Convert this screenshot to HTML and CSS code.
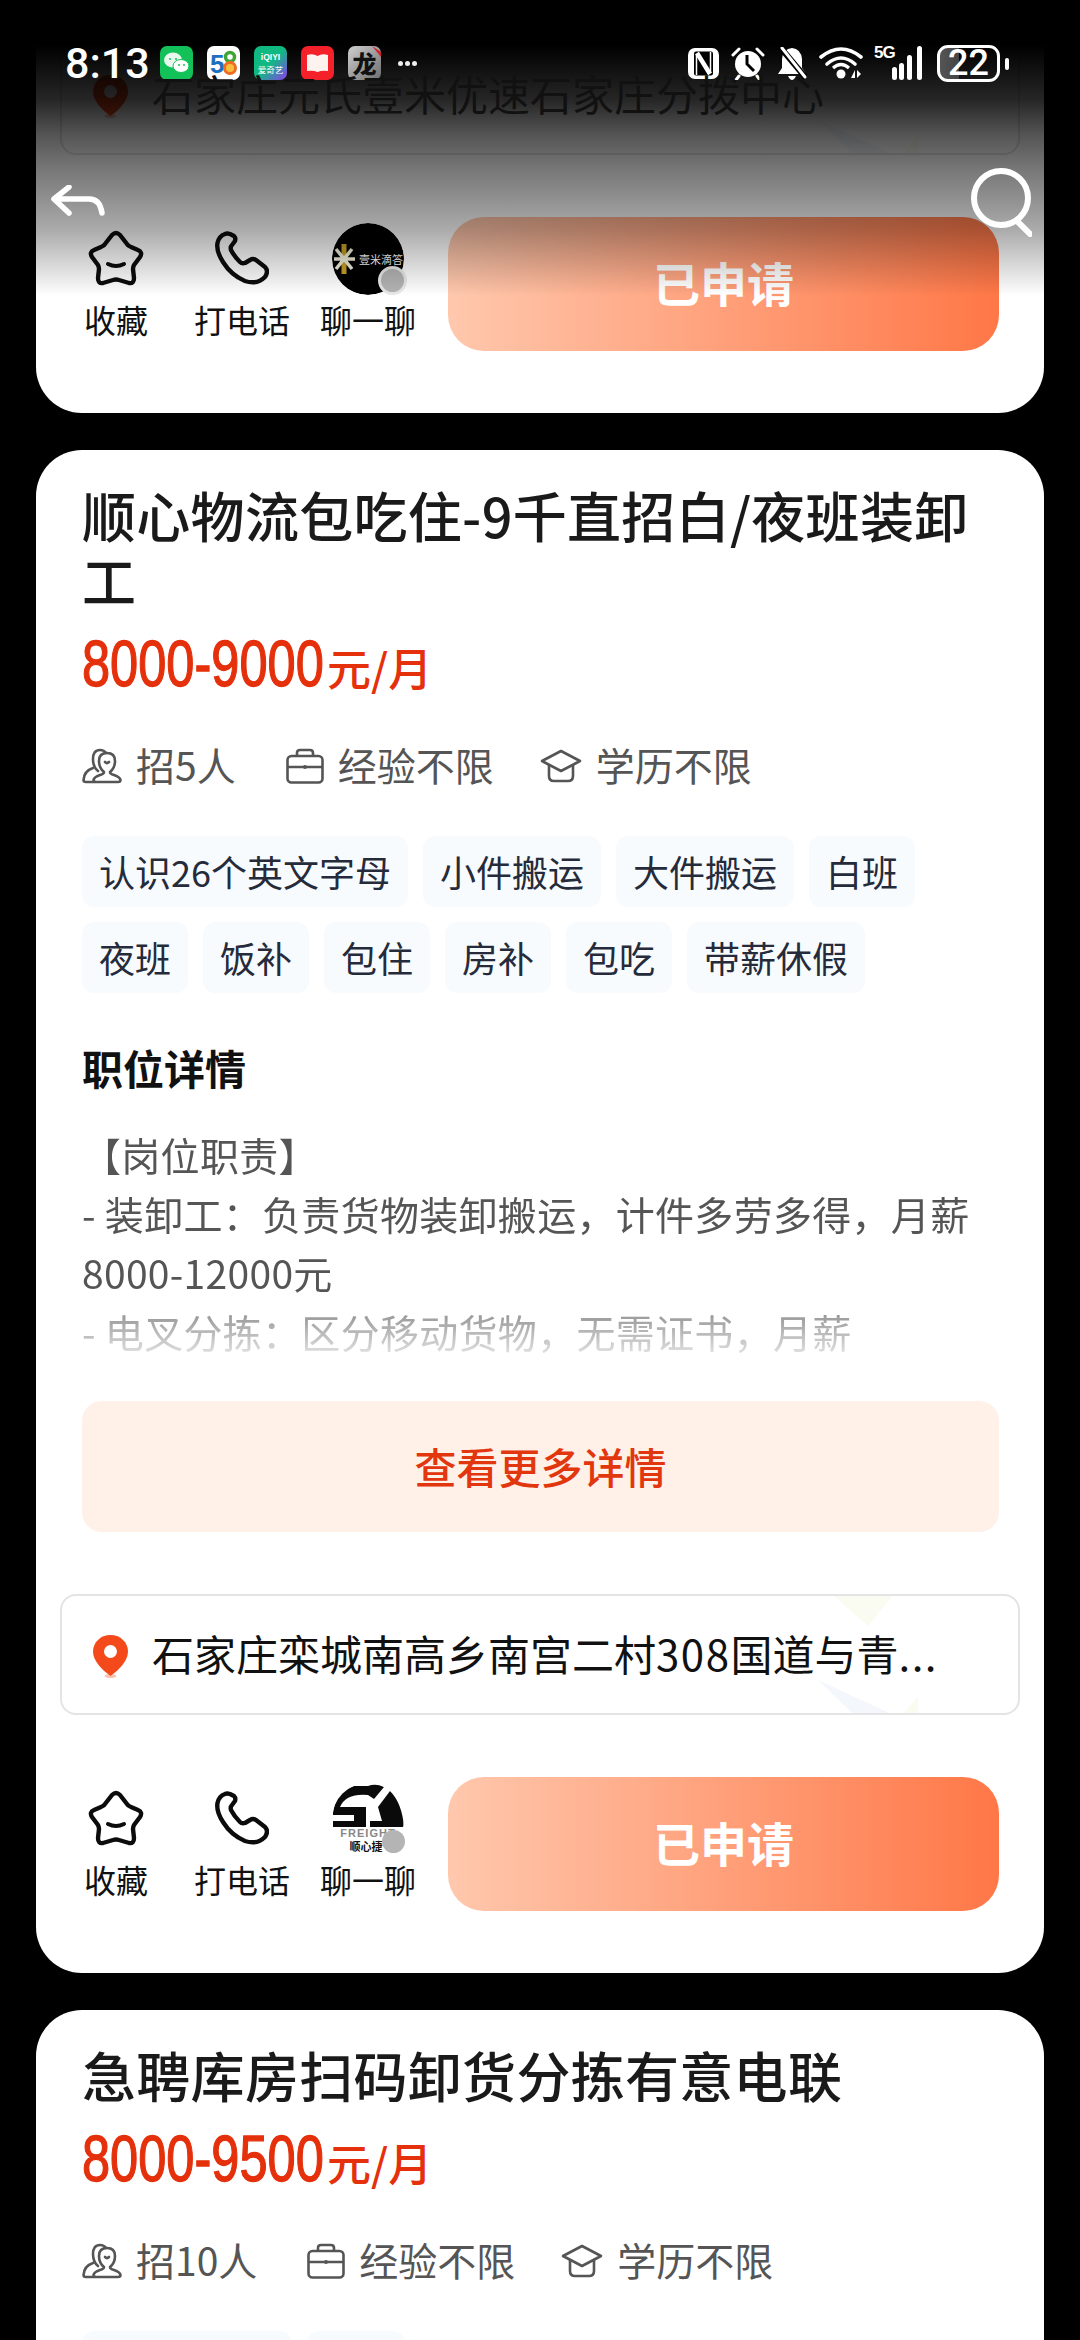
FILE: index.html
```html
<!DOCTYPE html>
<html lang="zh-CN">
<head>
<meta charset="utf-8">
<title>职位列表</title>
<link rel="stylesheet" href="styles.css">
</head>
<body>
<svg class="defs" aria-hidden="true">
  <symbol id="i-star" viewBox="0 0 56 56"><path d="M24 5Q28 1 32 5L39 14Q40 16 43 17L50 20Q55 22 52 27L46 35Q45 37 45 39L46 48Q46 54 41 53L31 50Q28 49 25 50L15 53Q10 54 10 48L11 39Q11 37 10 35L4 27Q1 22 6 20L13 17Q16 16 17 14Z" fill="none" stroke="#0c0c0c" stroke-width="4.400" stroke-linejoin="round"/><path d="M20 34Q28 38 36 34" fill="none" stroke="#0c0c0c" stroke-width="4" stroke-linecap="round"/></symbol>
  <symbol id="i-phone" viewBox="0 0 54 54"><path d="M10 3Q4 5 2.500 12Q1 20 8 31Q16 44 30 50Q42 54 50 46Q54 40 50 36L41 29Q38 27 35 29L30 32Q27 33 25 31Q19 25 16 19Q15 16 17 14L20 10Q21 7 19 5L15 3Q12 2 10 3Z" fill="none" stroke="#0c0c0c" stroke-width="4.400" stroke-linejoin="round"/></symbol>
  <symbol id="i-people" viewBox="0 0 40 36"><g fill="none" stroke="#555" stroke-width="2.600" stroke-linejoin="round" stroke-linecap="round"><path d="M16 23Q11 19 11 11Q11 2 18 2Q22 2 24 5"/><path d="M11 20Q2 23 1.500 32Q1.500 34 4 34H13"/><path d="M22 24Q17 20 17 13Q17 5 25 5Q33 5 33 13Q33 20 28 24Q28 26 32 27Q38 29 38.500 32Q38.500 34 36 34H14Q11.500 34 11.500 32Q12 29 18 27Q22 26 22 24Z"/><path d="M23 14Q25 16 27 14"/></g></symbol>
  <symbol id="i-case" viewBox="0 0 38 36"><g fill="none" stroke="#555" stroke-width="2.600" stroke-linejoin="round"><rect x="1.500" y="8" width="35" height="26.500" rx="4"/><path d="M11 8V5Q11 2 14 2H24Q27 2 27 5V8"/><path d="M1.500 19H36.500"/></g><circle cx="19" cy="19" r="2" fill="#555"/></symbol>
  <symbol id="i-cap" viewBox="0 0 42 34"><g fill="none" stroke="#555" stroke-width="2.600" stroke-linejoin="round" stroke-linecap="round"><path d="M21 2L40 12L21 22L2 12Z"/><path d="M9 16V27Q9 32 14 32H28Q33 32 33 27V16"/></g></symbol>
  <symbol id="i-pin" viewBox="0 0 35 43"><ellipse cx="17.500" cy="41" rx="6" ry="2" fill="#f5c4b5"/><path d="M17.500 0C7.500 0 0 7.500 0 16.500C0 26 9 35 17.500 41C26 35 35 26 35 16.500C35 7.500 27.500 0 17.500 0Z" fill="#f4491a"/><circle cx="17.500" cy="16.500" r="6.500" fill="#fff"/></symbol>
  <symbol id="i-deco" viewBox="0 0 100 121"><path d="M14 0H76L50 32Z" fill="#fafbf1"/><path d="M0 86L76 121H36Z" fill="#f4f8fc"/><path d="M84 121L100 102V121Z" fill="#fafbf1"/></symbol>
</svg>

<main class="screen">
  <div class="list">
    <section class="card card-top">
      <div class="loc">
        <svg class="pin"><use href="#i-pin"/></svg>
        <span class="loc-text">石家庄元氏壹米优速石家庄分拨中心</span>
        <svg class="deco"><use href="#i-deco"/></svg>
      </div>
      <div class="actions">
        <div class="act"><svg class="act-star"><use href="#i-star"/></svg><span>收藏</span></div>
        <div class="act"><svg class="act-phone"><use href="#i-phone"/></svg><span>打电话</span></div>
        <div class="act">
          <div class="avatar">
            <svg viewBox="0 0 72 72" class="avatar-img"><circle cx="36" cy="36" r="36" fill="#000"/><path d="M12 21V51" stroke="#c9a227" stroke-width="5"/><path d="M2 36H23M4 26L20 46M20 26L4 46" stroke="#f3f0dc" stroke-width="3.500"/><text x="27" y="41" class="avatar-logo">壹米滴答</text></svg>
            <i class="dot dot-ring"></i>
          </div>
          <span>聊一聊</span>
        </div>
        <button class="apply" type="button">已申请</button>
      </div>
    </section>

    <section class="card">
      <div class="body">
        <h2 class="title">顺心物流包吃住-9千直招白/夜班装卸工</h2>
        <p class="pay"><b>8000-9000</b><span>元/月</span></p>
        <ul class="meta">
          <li><svg class="m-people"><use href="#i-people"/></svg>招5人</li>
          <li><svg class="m-case"><use href="#i-case"/></svg>经验不限</li>
          <li><svg class="m-cap"><use href="#i-cap"/></svg>学历不限</li>
        </ul>
        <ul class="tags">
          <li>认识26个英文字母</li><li>小件搬运</li><li>大件搬运</li><li>白班</li>
          <li>夜班</li><li>饭补</li><li>包住</li><li>房补</li><li>包吃</li><li>带薪休假</li>
        </ul>
        <h3 class="sub">职位详情</h3>
        <div class="desc">【岗位职责】<br>- 装卸工：负责货物装卸搬运，计件多劳多得，月薪8000-12000元<br>- 电叉分拣：区分移动货物，无需证书，月薪</div>
        <button class="more" type="button">查看更多详情</button>
      </div>
      <div class="loc">
        <svg class="pin"><use href="#i-pin"/></svg>
        <span class="loc-text">石家庄栾城南高乡南宫二村<span class="num">308</span>国道与青<span class="num">...</span></span>
        <svg class="deco"><use href="#i-deco"/></svg>
      </div>
      <div class="actions">
        <div class="act"><svg class="act-star"><use href="#i-star"/></svg><span>收藏</span></div>
        <div class="act"><svg class="act-phone"><use href="#i-phone"/></svg><span>打电话</span></div>
        <div class="act">
          <div class="avatar">
            <svg viewBox="0 0 72 72" class="avatar-img"><path d="M1 30Q4 8 22 3L36 3Q44 0 52 4L42 16L36 12Q14 10 8 24H34V44H1V38H22V32H1Z" fill="#0a0a0a"/><path d="M46 24L58 8Q70 20 72 44H38V38H50Z" fill="#0a0a0a"/><text x="36" y="54" class="avatar-en">FREIGHT</text><text x="34" y="68" class="avatar-cn">顺心捷</text></svg>
            <i class="dot"></i>
          </div>
          <span>聊一聊</span>
        </div>
        <button class="apply" type="button">已申请</button>
      </div>
    </section>

    <section class="card card-last">
      <div class="body">
        <h2 class="title">急聘库房扫码卸货分拣有意电联</h2>
        <p class="pay"><b>8000-9500</b><span>元/月</span></p>
        <ul class="meta">
          <li><svg class="m-people"><use href="#i-people"/></svg>招10人</li>
          <li><svg class="m-case"><use href="#i-case"/></svg>经验不限</li>
          <li><svg class="m-cap"><use href="#i-cap"/></svg>学历不限</li>
        </ul>
        <div class="tags">
          <span class="tag-blank tag-wide"></span><span class="tag-blank tag-narrow"></span>
        </div>
      </div>
    </section>
  </div>

  <div class="shade"></div>

  <header class="status">
    <div class="status-left">
      <time class="clock">8:13</time>
      <svg class="app" viewBox="0 0 33 34"><rect width="33" height="34" rx="7" fill="#12c258"/><ellipse cx="13" cy="14" rx="9" ry="7.500" fill="#e9f7ee"/><ellipse cx="21" cy="20" rx="8" ry="6.500" fill="#fff" stroke="#12c258"/><circle cx="10" cy="13" r="1" fill="#12c258"/><circle cx="16" cy="13" r="1" fill="#12c258"/><circle cx="19" cy="19" r="1" fill="#12c258"/><circle cx="24" cy="19" r="1" fill="#12c258"/></svg>
      <svg class="app" viewBox="0 0 33 34"><rect width="33" height="34" rx="7" fill="#fff"/><text x="3" y="27" class="app-58a">5</text><circle cx="23" cy="11" r="4.500" fill="none" stroke="#3fa535" stroke-width="3.500"/><circle cx="23" cy="22" r="5.500" fill="#f5c13c" stroke="#ef6c24" stroke-width="3"/></svg>
      <svg class="app" viewBox="0 0 33 34"><defs><linearGradient id="g-iq" x1="0" y1="0" x2="1" y2="1"><stop offset=".5" stop-color="#10b981"/><stop offset="1" stop-color="#8b3ff0"/></linearGradient></defs><rect width="33" height="34" rx="7" fill="url(#g-iq)"/><text x="16.500" y="14" class="app-iq">iQIYI</text><text x="16.500" y="27" class="app-iq2">爱奇艺</text></svg>
      <svg class="app" viewBox="0 0 33 34"><rect width="33" height="34" rx="7" fill="#f4202a"/><path d="M6 9Q12 7 16.500 10Q21 7 27 9V25Q21 24 16.500 26Q12 24 6 25Z" fill="#fdf3ee"/></svg>
      <svg class="app" viewBox="0 0 33 34"><defs><linearGradient id="g-game" x1="0" y1="0" x2="1" y2="1"><stop offset="0" stop-color="#cfcfcf"/><stop offset="1" stop-color="#6e6e6e"/></linearGradient></defs><rect width="33" height="34" rx="7" fill="url(#g-game)"/><path d="M24 0L33 6V11Z" fill="#d5202a"/><text x="16.500" y="27" class="app-game">龙</text></svg>
      <span class="more-dots"><i></i><i></i><i></i></span>
    </div>
    <div class="status-right">
      <svg class="s-nfc" viewBox="0 0 31 31"><rect width="31" height="31" rx="7" fill="#fff"/><rect x="6" y="3.500" width="19" height="24" rx="2" fill="#000"/><path d="M9 5L22 26" stroke="#fff" stroke-width="4.500"/><path d="M8.500 6V27M22.500 4V25" stroke="#fff" stroke-width="1.500"/></svg>
      <svg class="s-alarm" viewBox="0 0 36 33"><circle cx="18" cy="17" r="13" fill="#fff"/><path d="M17 8V17L24 24" fill="none" stroke="#000" stroke-width="3"/><path d="M3 8L9 2M33 8L27 2M9 29L6 33M27 29L30 33" stroke="#fff" stroke-width="3" stroke-linecap="round"/></svg>
      <svg class="s-bell" viewBox="0 0 30 33"><path d="M15 1Q24 2 25 12V21L29 27H1L5 21V12Q6 2 15 1Z" fill="#fff"/><path d="M11 29H19Q17 33 15 33Q13 33 11 29Z" fill="#fff"/><path d="M3 0L29 31" stroke="#000" stroke-width="6"/><path d="M5 1L28 30" stroke="#fff" stroke-width="3" stroke-linecap="round"/></svg>
      <svg class="s-wifi" viewBox="0 0 44 34"><g fill="none" stroke="#fff" stroke-width="3.600" stroke-linecap="round"><path d="M2 11Q22 -5 42 11"/><path d="M8 18Q22 6 36 18"/></g><path d="M14 22Q22 15 30 22" fill="none" stroke="#fff" stroke-width="3.200"/><circle cx="22" cy="28" r="4.500" fill="#fff"/><path d="M32 32L36 24V32ZM38 24L42 28L38 32Z" fill="#fff"/></svg>
      <div class="s-signal">
        <span class="s-5g">5G</span>
        <svg viewBox="0 0 42 36"><g fill="#fff"><rect x="8" y="22" width="5" height="13" rx="2.500"/><rect x="15" y="18" width="5" height="17" rx="2.500"/><rect x="23" y="10" width="5" height="25" rx="2.500"/><rect x="33" y="1" width="5" height="34" rx="2.500"/></g></svg>
      </div>
      <div class="battery"><span>22</span></div>
    </div>
  </header>

  <svg class="back" viewBox="0 0 54 31"><path d="M18 2L3 14L18 28M4 14H38Q49 14 51 28" fill="none" stroke="#fff" stroke-width="5.500" stroke-linecap="round" stroke-linejoin="round"/></svg>
  <svg class="search" viewBox="0 0 62 70"><circle cx="31" cy="31" r="27" fill="none" stroke="#fff" stroke-width="6"/><path d="M47 54L60 67" stroke="#fff" stroke-width="6" stroke-linecap="round"/></svg>
</main>
</body>
</html>
```
FILE: styles.css
```css
* { box-sizing: border-box; }
html, body { margin: 0; padding: 0; background: #000; }
body {
  font-family: "Noto Sans CJK SC", "Noto Sans", sans-serif;
  color: #111;
}
ul { list-style: none; margin: 0; padding: 0; }
h2, h3, p { margin: 0; }
button { font-family: inherit; border: 0; cursor: pointer; }

.defs { position: absolute; width: 0; height: 0; }

.screen {
  position: relative;
  width: 1080px;
  height: 2340px;
  overflow: hidden;
  background: #000;
}

.list {
  display: flex;
  flex-direction: column;
  gap: 37px;
  padding: 0 36px;
}

.card {
  background: #fff;
  border-radius: 46px;
  padding-bottom: 62px;
  flex: none;
}
.card-top { padding-top: 34px; border-radius: 0 0 46px 46px; }
.card-last { padding-bottom: 40px; }

.body { padding: 32px 45px 0 46px; }

.title {
  font-size: 54px;
  line-height: 65px;
  font-weight: 500;
  letter-spacing: .3px;
  color: #1a1a1a;
}

.pay {
  display: flex;
  align-items: baseline;
  margin-top: 17px;
  height: 70px;
  line-height: 70px;
  color: #e5300c;
}
.pay b {
  width: 240px;
  font-family: "Liberation Sans", sans-serif;
  font-size: 64px;
  font-weight: 400;
  white-space: nowrap;
  transform: scaleX(.79);
  transform-origin: 0 50%;
  -webkit-text-stroke: 1.300px #e5300c;
}
.pay span { font-size: 44px; font-weight: 500; margin-left: 5px; }

.meta {
  display: flex;
  gap: 50px;
  margin-top: 40px;
  height: 50px;
  align-items: center;
  font-size: 39px;
  line-height: 50px;
  color: #555;
}
.meta li { display: flex; align-items: center; gap: 14px; }
.meta svg { flex: none; }
.m-people { width: 40px; height: 36px; margin-top: 3px; }
.m-case { width: 38px; height: 36px; margin-top: 3px; }
.m-cap { width: 42px; height: 34px; margin-top: 3px; margin-left: -4px; }

.tags {
  display: flex;
  flex-wrap: wrap;
  gap: 15px;
  margin-top: 47px;
  font-size: 36px;
  line-height: 70px;
  color: #252b3a;
}
.tags li {
  padding: 0 17px;
  height: 71px;
  background: #f8fbfd;
  border-radius: 12px;
}
.tag-blank { height: 71px; background: #f8fbfd; border-radius: 12px; }
.tag-wide { width: 210px; }
.tag-narrow { width: 98px; }

.sub {
  margin-top: 49px;
  font-size: 41px;
  line-height: 50px;
  font-weight: 700;
  color: #111;
}

.desc {
  margin-top: 33px;
  height: 236px;
  overflow: hidden;
  font-size: 39px;
  line-height: 59px;
  letter-spacing: .3px;
  color: #555;
  -webkit-mask-image: linear-gradient(#000 178px, rgba(0,0,0,.6) 190px, rgba(0,0,0,.15) 232px);
  mask-image: linear-gradient(#000 178px, rgba(0,0,0,.6) 190px, rgba(0,0,0,.15) 232px);
}

.more {
  display: block;
  width: 100%;
  height: 131px;
  margin-top: 40px;
  background: #fff0e8;
  border-radius: 20px;
  font-size: 42px;
  font-weight: 500;
  color: #e2370e;
  padding-bottom: 4px;
}

.loc {
  position: relative;
  display: flex;
  align-items: center;
  gap: 24px;
  height: 121px;
  margin: 62px 24px 0;
  padding-left: 31px;
  border: 2px solid #e4e4e4;
  border-radius: 16px;
  overflow: hidden;
}
.card-top .loc { margin-top: 0; }
.pin { width: 35px; height: 43px; flex: none; margin-top: 3px; }
.loc-text { font-size: 42px; line-height: 60px; color: #111; white-space: nowrap; position: relative; z-index: 1; margin-top: -4px; }
.num { letter-spacing: 1.500px; }
.deco { position: absolute; right: 100px; top: -2px; width: 100px; height: 121px; }

.actions {
  display: flex;
  align-items: flex-start;
  gap: 14px;
  margin: 62px 45px 0 24px;
}
.act {
  width: 112px;
  height: 134px;
  display: flex;
  flex-direction: column;
  align-items: center;
  font-size: 32px;
  line-height: 44px;
  color: #111;
  white-space: nowrap;
}
.act > span { margin-top: auto; margin-bottom: 10px; }
.act-star { width: 56px; height: 56px; margin-top: 13px; }
.act-phone { width: 54px; height: 54px; margin-top: 14px; }

.avatar { position: relative; width: 72px; height: 72px; margin-top: 6px; }
.avatar-img { display: block; width: 72px; height: 72px; border-radius: 50%; }
.avatar-logo { font-size: 11px; fill: #fff; }
.avatar-en { font-family: "Liberation Sans", sans-serif; font-size: 11px; font-weight: 700; letter-spacing: 1px; fill: #888; text-anchor: middle; }
.avatar-cn { font-size: 11px; font-weight: 700; fill: #111; text-anchor: middle; }
.dot {
  position: absolute;
  right: -1px;
  bottom: 2px;
  width: 23px;
  height: 23px;
  border-radius: 50%;
  background: #b4b4b4;
}
.dot-ring { box-sizing: content-box; right: -3px; bottom: 0; border: 3px solid #e8e8e8; }

.apply {
  flex: none;
  width: 551px;
  height: 134px;
  margin-left: 10px;
  border-radius: 36px;
  background: linear-gradient(90deg, #ffc8ad, #ff7747);
  color: #fff;
  font-size: 47px;
  font-weight: 700;
  padding-bottom: 6px;
}

.shade {
  position: absolute;
  left: 0;
  top: 0;
  width: 100%;
  height: 296px;
  pointer-events: none;
  background: linear-gradient(180deg,
    #000 0,
    #000 45px,
    rgba(0,0,0,.85) 100px,
    rgba(0,0,0,.68) 133px,
    rgba(0,0,0,.54) 167px,
    rgba(0,0,0,.43) 200px,
    rgba(0,0,0,.33) 230px,
    rgba(0,0,0,.13) 270px,
    rgba(0,0,0,0) 296px);
}

.status {
  position: absolute;
  left: 0;
  top: 0;
  width: 100%;
  height: 90px;
  display: flex;
  justify-content: space-between;
  padding: 43px 80px 0 65px;
  color: #fff;
}
.status-left { display: flex; align-items: center; gap: 14px; height: 40px; }
.clock { font-family: Roboto, sans-serif; font-size: 43px; font-weight: 500; line-height: 40px; margin-right: -4px; }
.app { width: 33px; height: 34px; flex: none; }
.app-58a { font-family: "Liberation Sans", sans-serif; font-size: 26px; font-weight: 700; fill: #1d6fc0; }
.app-iq { font-family: "Liberation Sans", sans-serif; font-size: 8.500px; font-weight: 700; fill: #fff; text-anchor: middle; }
.app-iq2 { font-size: 8.500px; fill: #fff; text-anchor: middle; }
.app-game { font-size: 24px; font-weight: 900; fill: #111; text-anchor: middle; }
.more-dots { display: flex; gap: 2px; margin-left: 3px; }
.more-dots i { width: 5px; height: 5px; border-radius: 50%; background: #eee; }

.status-right { display: flex; align-items: center; height: 40px; gap: 11px; }
.s-nfc { width: 31px; height: 31px; }
.s-alarm { width: 36px; height: 33px; }
.s-bell { width: 30px; height: 33px; }
.s-wifi { width: 44px; height: 34px; margin-left: 1px; }
.s-signal { position: relative; width: 52px; height: 36px; }
.s-signal svg { position: absolute; left: 10px; top: 0; width: 42px; height: 36px; }
.s-5g { position: absolute; left: 0; top: -1px; font-family: "Liberation Sans", sans-serif; font-size: 17px; line-height: 18px; font-weight: 700; letter-spacing: -1px; }
.battery {
  position: relative;
  width: 63px;
  height: 37px;
  border: 3px solid #fff;
  border-radius: 11px;
  background: linear-gradient(90deg, #555 0, #444 34%, transparent 34%);
  text-align: center;
  font-family: Roboto, sans-serif;
  font-size: 36px;
  font-weight: 500;
  line-height: 31px;
}
.battery::after {
  content: "";
  position: absolute;
  right: -12px;
  top: 10px;
  width: 4px;
  height: 12px;
  border-radius: 2px;
  background: #fff;
}

.back { position: absolute; left: 51px; top: 185px; width: 54px; height: 31px; }
.search { position: absolute; left: 970px; top: 167px; width: 62px; height: 70px; }
```
